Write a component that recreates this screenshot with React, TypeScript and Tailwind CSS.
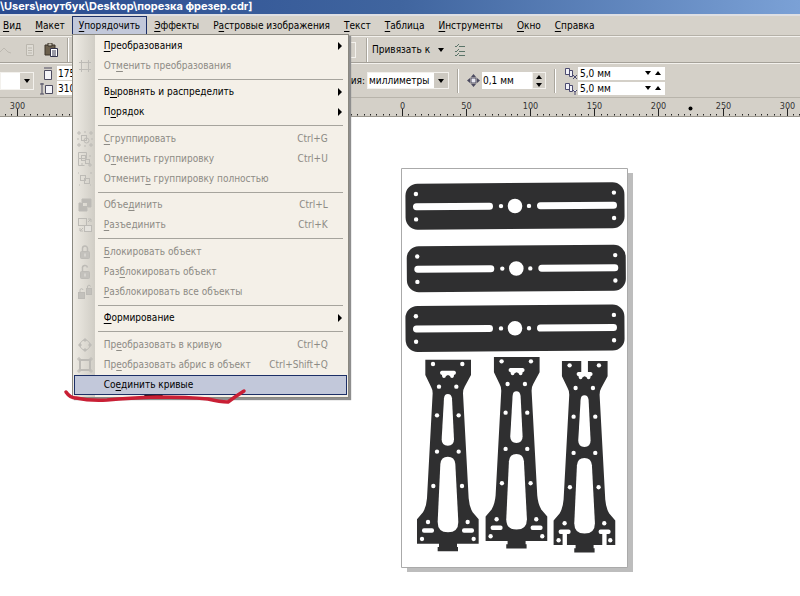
import type { ReactNode } from 'react';

type Entry = {
  before?: string;
  key: string;
  after?: string;
  icon?: ReactNode;
  shortcut?: string;
  submenu?: boolean;
  disabled?: boolean;
  active?: boolean;
};

const MENUS_LEFT: Entry[] = [
  { key: 'В', after: 'ид' },
  { key: 'М', after: 'акет' },
];

const MENUS_RIGHT: Entry[] = [
  { key: 'Э', after: 'ффекты' },
  { before: 'Р', key: 'а', after: 'стровые изображения' },
  { key: 'Т', after: 'екст' },
  { key: 'Т', after: 'аблица' },
  { key: 'И', after: 'нструменты' },
  { key: 'О', after: 'кно' },
  { key: 'С', after: 'правка' },
];

function Glyph({ children }: { children: ReactNode }) {
  return (
    <svg viewBox="0 0 16 16" className="size-4" fill="none" stroke="#bdbbb6">
      {children}
    </svg>
  );
}

const Corners = () => (
  <path d="M1 1h2v2H1zM13 1h2v2h-2zM1 13h2v2H1zM13 13h2v2h-2zM7 1h2M7 15h2M1 7v2M15 7v2" />
);

const Lock = ({ open = false }: { open?: boolean }) => (
  <Glyph>
    <rect x="3.5" y="7.5" width="9" height="7" rx="1" fill="#c3c1bc" />
    <path d={open ? 'M5.500 7V4.500a2.500 2.500 0 0 1 5-1' : 'M5.500 7V4.500a2.500 2.500 0 0 1 5 0V7'} strokeWidth="1.5" />
    <path d="M8 9.500v3" stroke="#e8e6e1" />
  </Glyph>
);

const GROUPS: { className: string; items: Entry[] }[] = [
  {
    className: 'pb-[3px]',
    items: [
      { key: 'П', after: 'реобразования', submenu: true },
      {
        before: 'От',
        key: 'м',
        after: 'енить преобразования',
        disabled: true,
        icon: (
          <Glyph>
            <rect x="4.500" y="4.500" width="7" height="7" />
            <path d="M2 4.500h2M4.500 2v2M12 4.500h2M11.500 2v2M2 11.500h2M4.500 12v2M12 11.500h2M11.500 12v2" />
          </Glyph>
        ),
      },
    ],
  },
  {
    className: 'pt-0.5 pb-[3px]',
    items: [
      { before: 'В', key: 'ы', after: 'ровнять и распределить', submenu: true },
      { before: 'П', key: 'о', after: 'рядок', submenu: true },
    ],
  },
  {
    className: 'py-[3px]',
    items: [
      {
        key: 'С',
        after: 'группировать',
        shortcut: 'Ctrl+G',
        disabled: true,
        icon: (
          <Glyph>
            <Corners />
            <rect x="4.500" y="4.500" width="5" height="5" />
            <circle cx="9.500" cy="9.500" r="2.500" />
          </Glyph>
        ),
      },
      {
        before: 'О',
        key: 'т',
        after: 'менить группировку',
        shortcut: 'Ctrl+U',
        disabled: true,
        icon: (
          <Glyph>
            <path d="M1.500 1.500h8v6h-8zM1.500 7.500v7h6" />
            <rect x="4.500" y="4.500" width="4" height="5" />
            <rect x="8.500" y="8.500" width="4" height="4" />
            <path d="M12 13h2v2h-2zM12 5h2M5 12v2" />
          </Glyph>
        ),
      },
      {
        before: 'Отменит',
        key: 'ь',
        after: ' группировку полностью',
        disabled: true,
        icon: (
          <Glyph>
            <rect x="3.500" y="4.500" width="5" height="5" />
            <rect x="7.500" y="7.500" width="5" height="5" />
            <path d="M1 2h1M13 2h2M13 14h1M2 14h1" />
          </Glyph>
        ),
      },
    ],
  },
  {
    className: 'pt-0.5 pb-[3px]',
    items: [
      {
        before: 'Объе',
        key: 'д',
        after: 'инить',
        shortcut: 'Ctrl+L',
        disabled: true,
        icon: (
          <Glyph>
            <path d="M5 2h9v8h-3V5H5z" fill="#bcbab5" />
            <path d="M2 6h3v4h5v4H2z" fill="#bcbab5" />
            <rect x="5.500" y="5.500" width="5" height="4" />
          </Glyph>
        ),
      },
      {
        key: 'Р',
        after: 'азъединить',
        shortcut: 'Ctrl+K',
        disabled: true,
        icon: (
          <Glyph>
            <rect x="1.500" y="1.500" width="8" height="7" />
            <rect x="7.500" y="8.500" width="7" height="6" fill="#e4e2dd" />
            <path d="M3 14l3-3M3 11v3h3M11 5l3-3M11 2h3v3" />
          </Glyph>
        ),
      },
    ],
  },
  {
    className: 'py-[3px]',
    items: [
      { key: 'Б', after: 'локировать объект', disabled: true, icon: <Lock /> },
      { before: 'Раз', key: 'б', after: 'локировать объект', disabled: true, icon: <Lock open /> },
      {
        key: 'Р',
        after: 'азблокировать все объекты',
        disabled: true,
        icon: (
          <Glyph>
            <rect x="1.500" y="8.500" width="6" height="6" fill="#c3c1bc" />
            <path d="M3 8V6.500a1.500 1.500 0 0 1 3-.5" />
            <rect x="9.500" y="4.500" width="5" height="6" fill="#c3c1bc" />
            <path d="M10.500 4V3a1.500 1.500 0 0 1 3-.5" />
          </Glyph>
        ),
      },
    ],
  },
  {
    className: 'pt-0.5 pb-[3px]',
    items: [{ key: 'Ф', after: 'ормирование', submenu: true }],
  },
  {
    className: 'pt-[3px]',
    items: [
      {
        before: 'Пр',
        key: 'е',
        after: 'образовать в кривую',
        shortcut: 'Ctrl+Q',
        disabled: true,
        icon: (
          <Glyph>
            <circle cx="8" cy="8" r="5" />
            <path d="M7 2h2v2H7zM7 12h2v2H7zM2 7h2v2H2zM12 7h2v2h-2z" fill="#c3c1bc" />
          </Glyph>
        ),
      },
      {
        before: 'Пр',
        key: 'е',
        after: 'образовать абрис в объект',
        shortcut: 'Ctrl+Shift+Q',
        disabled: true,
        icon: (
          <Glyph>
            <rect x="3" y="3" width="10" height="10" strokeWidth="2" />
            <path d="M1 1h2v2H1zM13 1h2v2h-2zM1 13h2v2H1zM13 13h2v2h-2z" />
          </Glyph>
        ),
      },
      { before: 'Со', key: 'е', after: 'динить кривые', active: true },
    ],
  },
];

function Label({ entry }: { entry: Entry }) {
  return (
    <span className="whitespace-pre">
      {entry.before}
      <span className="underline underline-offset-2">{entry.key}</span>
      {entry.after}
    </span>
  );
}

function MenuItem({ entry }: { entry: Entry }) {
  return (
    <button
      type="button"
      role="menuitem"
      disabled={entry.disabled}
      className={
        entry.active
          ? 'flex h-5 w-full items-center border border-[#1c2f66] bg-[#c2c8da] pr-1 text-left text-black'
          : 'flex h-5 w-full items-center border border-transparent pr-1 text-left text-black disabled:text-[#8d8b85]'
      }
    >
      <span className="flex w-[29px] shrink-0 items-center pl-0.5">{entry.icon}</span>
      <Label entry={entry} />
      {entry.shortcut && <span className="mr-[14px] ml-auto">{entry.shortcut}</span>}
      {entry.submenu && (
        <svg viewBox="0 0 4 8" className="ml-auto h-2 w-1" fill="#000">
          <path d="M0 0l4 4-4 4z" />
        </svg>
      )}
    </button>
  );
}

function ArrangeMenu() {
  return (
    <div
      role="menu"
      className="absolute top-full left-0 z-20 -mt-px w-[277px] border border-[#8a8880] bg-[linear-gradient(to_right,#eeebe4,#d0cdc5_22px,#f4f0e8_22px)] p-px shadow-[2px_2px_1px_#8e8e8e]"
    >
      {GROUPS.map((group, i) => (
        <div key={i}>
          {i > 0 && <div className="mr-1 ml-6 h-px bg-[#a6a49d]" />}
          <div className={group.className}>
            {group.items.map((entry, n) => (
              <MenuItem key={n} entry={entry} />
            ))}
          </div>
        </div>
      ))}
      <div className="h-px" />
    </div>
  );
}

function MenuBar() {
  return (
    <nav className="flex h-5 items-stretch border-b border-[#b5b1a8] bg-[#d6d2ca] text-black">
      <div className="-ml-1 flex">
        {MENUS_LEFT.map((m, i) => (
          <button key={i} type="button" className="px-[7px]">
            <Label entry={m} />
          </button>
        ))}
      </div>
      <div className="relative">
        <button type="button" aria-haspopup="menu" aria-expanded="true" className="h-full border border-[#1c2f66] bg-[#c2c8da] px-1.5">
          <Label entry={{ key: 'У', after: 'порядочить' }} />
        </button>
        <ArrangeMenu />
      </div>
      {MENUS_RIGHT.map((m, i) => (
        <button key={i} type="button" className="px-[7px] whitespace-nowrap">
          <Label entry={m} />
        </button>
      ))}
    </nav>
  );
}

const Down = () => (
  <svg viewBox="0 0 6 4" className="h-1 w-1.5 shrink-0" fill="#000">
    <path d="M0 0h6L3 4z" />
  </svg>
);

const Up = () => (
  <svg viewBox="0 0 6 4" className="h-1 w-1.5 shrink-0" fill="#000">
    <path d="M0 4h6L3 0z" />
  </svg>
);

const Divider = () => <div className="h-6 w-0.5 shrink-0 border-l border-[#aaa69d] bg-white" />;

function Toolbar() {
  return (
    <div className="flex h-[27px] items-center border-t border-b border-t-[#f3f1ed] border-b-[#a5a199] bg-[#d4d0c8]">
      <div className="flex w-[356px] items-center">
        <button type="button" aria-label="Отменить" className="w-6">
          <svg viewBox="0 0 12 12" className="size-3" fill="none" stroke="#bdb9b1">
            <path d="M0 8l4-4 4 4 3 1" />
          </svg>
        </button>
        <button type="button" aria-label="Копировать" className="w-5">
          <svg viewBox="0 0 12 14" className="h-3.5 w-3" fill="#dedbd4" stroke="#bbb7ae">
            <path d="M2.500 1.500h7v11h-7zM4 5h4M4 7.500h4M4 10h4" />
          </svg>
        </button>
        <button type="button" aria-label="Вставить" className="w-[23px]">
          <svg viewBox="0 0 14 14" className="size-3.5">
            <path d="M1 2h10v10H1z" fill="#6b5f4c" stroke="#3c342a" />
            <path d="M4 0h4v3H4z" fill="#c8c3b3" stroke="#3c342a" />
            <path d="M6.500 5.500h7v8h-7z" fill="#fff" stroke="#34344c" />
            <path d="M8 8h4M8 10h4M8 12h4" stroke="#34344c" />
          </svg>
        </button>
        <Divider />
        <button type="button" aria-label="Масштаб" className="ml-auto flex h-4 w-4 items-center justify-center border border-[#f3f1ed]">
          <Down />
        </button>
      </div>
      <div className="flex items-center pl-2.5">
        <Divider />
        <button type="button" className="flex items-center gap-2 px-1">
          Привязать к
          <Down />
        </button>
        <button type="button" aria-label="Параметры" className="pl-1.5">
          <svg viewBox="0 0 13 14" className="h-3.5 w-[13px]" fill="none" stroke="#5a7468">
            <path d="M1 3l1 1 3-3M1 8l1 1 3-3M1 12l1 1 3-3M5 3.500h6M5 8.500h6M5 12.500h6" />
          </svg>
        </button>
      </div>
    </div>
  );
}

function Spacing({ axis, label }: { axis: string; label: string }) {
  return (
    <label className="flex items-center gap-px">
      <span className="sr-only">{label}</span>
      <svg viewBox="0 0 13 13" className="size-[13px]" fill="#f2f2f8" stroke="#4c4b70">
        <path d="M1.500 1.500h4v6h-4zM5.500 3.500h3v6h-3z" />
        <path d={axis === 'x' ? 'M9 8l4 4M13 8l-4 4' : 'M9 8l2 2 2-2M11 10v3'} />
      </svg>
      <span className="flex h-[13px] w-[87px] items-center gap-1 bg-white pr-1">
        <input defaultValue="5,0 мм" className="h-full w-full min-w-0 bg-transparent pl-0.5 outline-none" />
        <Down />
        <Up />
      </span>
    </label>
  );
}

function PropertyBar() {
  return (
    <div className="flex h-[35px] items-center border-t border-b border-t-[#f3f1ed] border-b-[#b8b4ab] bg-[#d4d0c8]">
      <div className="flex w-[365px] items-center">
        <div className="flex h-[18px] w-[34px] items-center border border-[#f3f1ed] bg-white">
          <input aria-label="Формат" className="w-[19px] outline-none" />
          <button type="button" aria-label="Список форматов" className="flex h-full flex-1 items-center justify-center bg-[#d4d0c8]">
            <Down />
          </button>
        </div>
        <div className="ml-1.5 flex flex-col gap-px">
          <label className="flex items-center gap-1">
            <span className="sr-only">Ширина</span>
            <svg viewBox="0 0 13 13" className="size-[13px]" fill="#f4f4f8" stroke="#4c4b60">
              <path d="M4.500 3.500h7v9h-7zM4 1h8" />
            </svg>
            <input defaultValue="175" className="h-3.5 w-16 bg-white pl-px outline-none" />
          </label>
          <label className="flex items-center gap-1">
            <span className="sr-only">Высота</span>
            <svg viewBox="0 0 13 13" className="size-[13px]" fill="#f4f4f8" stroke="#4c4b60">
              <path d="M5.500 3.500h7v8h-7zM2 1v11M0 2h4M0 12h4" />
            </svg>
            <input defaultValue="310" className="h-3.5 w-16 bg-white pl-px outline-none" />
          </label>
        </div>
        <label htmlFor="units" className="ml-auto whitespace-nowrap">
          Единицы измерения:
        </label>
      </div>
      <div className="ml-0.5 flex h-[17px] w-[82px] shrink-0 items-center border border-[#f3f1ed] bg-white">
        <select id="units" className="h-full w-full appearance-none pl-px outline-none">
          <option>миллиметры</option>
        </select>
        <span className="flex h-full w-3.5 shrink-0 items-center justify-center bg-[#cdc9c1]">
          <Down />
        </span>
      </div>
      <div className="ml-2">
        <Divider />
      </div>
      <label className="ml-2 flex shrink-0 items-center gap-0.5">
        <span className="sr-only">Смещение</span>
        <svg viewBox="0 0 13 13" className="size-[13px]" fill="#4c4b60">
          <rect x="4" y="4" width="5" height="5" fill="#e8e8f0" stroke="#4c4b60" />
          <path d="M6.500 0l2.500 3H4zM6.500 13l2.500-3H4zM0 6.500l3-2.500v5zM13 6.500l-3-2.500v5z" />
        </svg>
        <input defaultValue="0,1 мм" className="h-[17px] w-[50px] bg-white pl-px outline-none" />
      </label>
      <span className="flex h-[17px] w-3.5 shrink-0 flex-col items-center justify-center gap-1 border border-[#f3f1ed]">
        <Up />
        <Down />
      </span>
      <div className="mr-2 ml-2">
        <Divider />
      </div>
      <div className="flex shrink-0 flex-col gap-0.5">
        <Spacing axis="x" label="Интервал по горизонтали" />
        <Spacing axis="y" label="Интервал по вертикали" />
      </div>
    </div>
  );
}

const ORIGIN = 402;
const STEP = 6.41;

function Ruler() {
  const ticks = Array.from({ length: 126 }, (_, i) => i - 63);
  return (
    <svg className="block h-[19px] w-full bg-[#d4d0c8]" stroke="#222">
      {ticks.map((n) => {
        const x = Math.round(ORIGIN + n * STEP) + 0.5;
        const major = n % 10 === 0;
        return (
          <g key={n}>
            <path d={major ? `M${x} 11v7` : `M${x} 16v1.500`} />
            {major && (
              <text x={x} y="11" textAnchor="middle" stroke="none" fill="#333" className="text-[9px]">
                {Math.abs(n * 5)}
              </text>
            )}
          </g>
        );
      })}
      <circle cx="690.5" cy="10.5" r="2" fill="#000" stroke="none" />
      <path d="M0 18.500h4000" stroke="#9b978e" />
    </svg>
  );
}

function Plate({ x, y }: { x: number; y: number }) {
  return (
    <g transform={`translate(${x} ${y}) rotate(-0.4)`}>
      <rect x="-109.500" y="-23" width="219" height="46" rx="12" fill="#2f2f30" />
      <g fill="#fff">
        <circle r="7.300" />
        <circle cx="-14" r="2.200" />
        <circle cx="14" r="2.200" />
        <rect x="-102" y="-3.500" width="80" height="7" rx="3.500" />
        <rect x="22" y="-3.500" width="80" height="7" rx="3.500" />
        <circle cx="-99" cy="-12.700" r="2.200" />
        <circle cx="-99" cy="12.700" r="2.200" />
        <circle cx="99" cy="-12.700" r="2.200" />
        <circle cx="99" cy="12.700" r="2.200" />
      </g>
    </g>
  );
}

const HOLES = [
  [99, 42], [187, 42], [117, 110], [169, 110], [111, 196], [176, 196], [111, 305],
  [176, 305], [100, 408], [186, 408], [84, 516], [203, 516], [66, 567], [221, 567],
];

// arm coordinates are in thirds of a ruler pixel
function Arm({ x, y, open = false }: { x: number; y: number; open?: boolean }) {
  return (
    <g transform={`translate(${x} ${y}) scale(0.3333)`}>
      <path
        fill="#2f2f30"
        d="M76 29H213V75L194 110Q189 118 189 130L206 445Q208 470 218 487L236 508V581H171V591H174V604H113V591H117V581H51V508L69 487Q79 470 81 445L98 130Q98 118 93 110L76 75Z"
      />
      <g fill="#fff">
        {HOLES.map(([cx, cy]) => (
          <circle key={`${cx}-${cy}`} cx={cx} cy={cy} r="6.500" />
        ))}
        <path d="M125 62H163Q168 63 168 68Q168 74 162 75Q162 84 156 84Q151 84 150 78L144 75L138 78Q137 84 132 84Q126 84 126 75Q120 74 120 68Q120 63 125 62Z" />
        <path d="M132 145Q133 132 143.500 132Q154 132 156 145L162 268Q162 287 143.500 287Q125 287 125 268Z" />
        <path d="M121 342Q123 320 143.500 320Q164 320 166 342L175 516Q175 547 144 547Q113 547 113 516Z" />
        <rect x="66" y="535" width="36" height="13" rx="6" />
        <rect x="186" y="535" width="36" height="13" rx="6" />
        {open && <path d="M134 25h20v40h-20zM78 541h13v42H78zM197 541h13v42h-13z" />}
      </g>
    </g>
  );
}

function Canvas() {
  return (
    <main className="relative min-h-[479px] flex-1 overflow-hidden bg-white">
      <svg viewBox="401 168 233 405" className="absolute top-[51px] left-[401px] h-[405px] w-[233px]">
        <path d="M407 173h226v399H407z" fill="#bdbdbd" />
        <path d="M401.500 168.500h226v399h-226z" fill="#fff" stroke="#aaa" />
        <Plate x={515} y={206} />
        <Plate x={516.3} y={268.5} />
        <Plate x={515} y={328.3} />
        <Arm x={400} y={350} />
        <Arm x={468.6} y={347.3} />
        <Arm x={536.6} y={351.3} open />
      </svg>
    </main>
  );
}

export default function App() {
  return (
    <div className="relative flex min-h-screen flex-col overflow-hidden bg-white font-['DejaVu_Sans_Condensed','DejaVu_Sans',sans-serif] text-[10px] leading-3 text-black">
      <header className="flex h-4 items-start border-b-2 border-[#dedfe3] bg-linear-to-r from-[#2a4b90] via-[#40659f] to-[#7ba1d6] font-['Inter',sans-serif] text-[11px] font-bold whitespace-pre text-white">
        \Users\ноутбук\Desktop\порезка фрезер.cdr]
      </header>
      <MenuBar />
      <Toolbar />
      <PropertyBar />
      <Ruler />
      <Canvas />
      <svg viewBox="0 0 190 20" className="absolute top-[387px] left-[62px] z-30 h-5 w-[190px]" fill="none" strokeLinecap="round" strokeLinejoin="round">
        <path d="M83 8.500h17" stroke="#111" strokeWidth="1.500" />
        <path d="M4 5Q8 11 14 11Q28 14 45 13Q68 11 95 10Q125 10 146 12Q158 15 166 15Q174 9 182 4" stroke="#c91f35" strokeWidth="3.500" />
      </svg>
    </div>
  );
}
